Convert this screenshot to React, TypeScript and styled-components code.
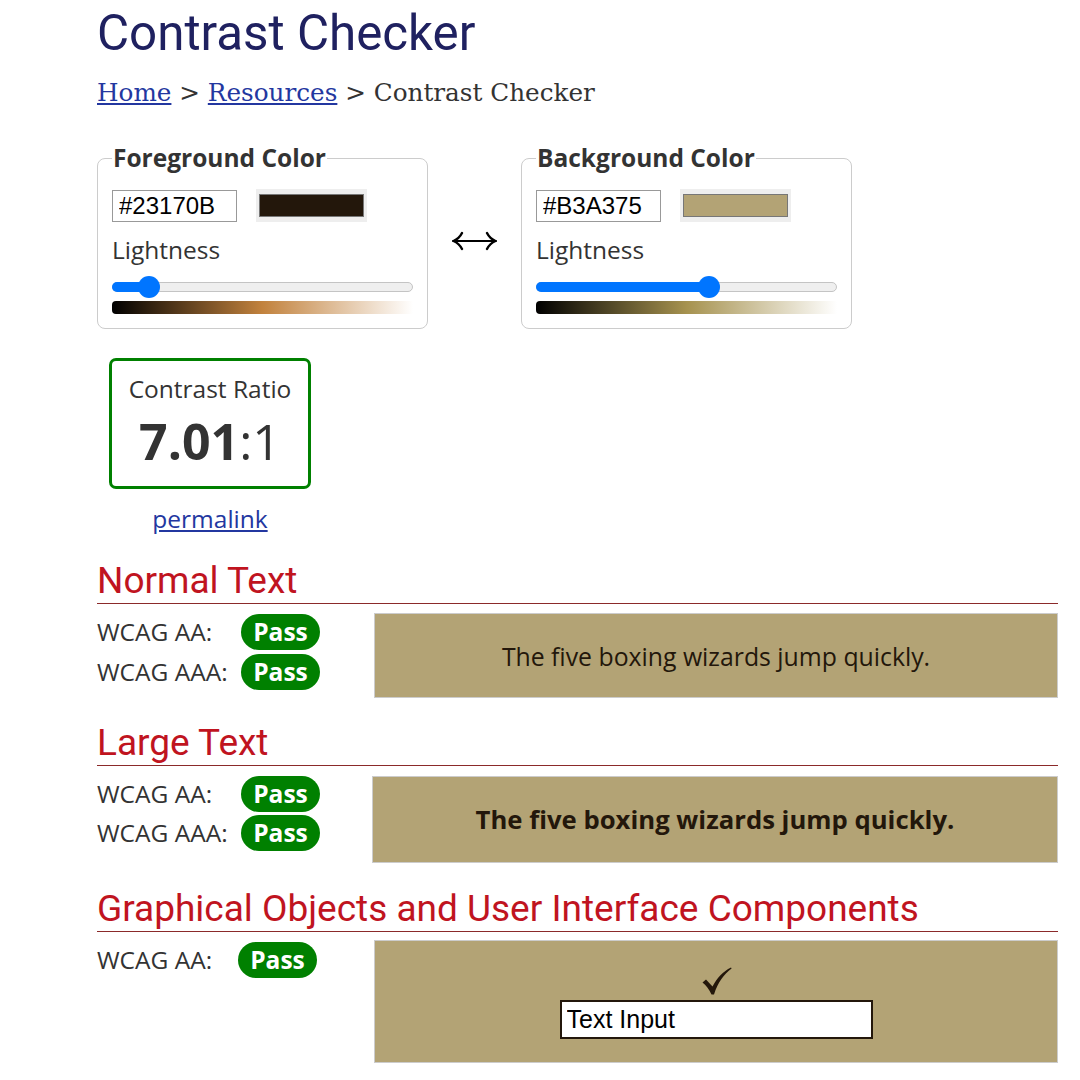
import styled, { createGlobalStyle } from "styled-components";

const GlobalStyle = createGlobalStyle`
  body {
    margin: 0;
    background: #fff;
    font-family: "Open Sans", "Liberation Sans", sans-serif;
    color: #333;
  }
`;

const FG = "#23170B";
const BG = "#B3A375";

const Page = styled.div`
  padding: 0 22px 0 97px;
`;

const Title = styled.h1`
  margin: 0;
  padding-top: 4px;
  font-family: Roboto, sans-serif;
  font-weight: 400;
  font-size: 49.3px;
  line-height: 58px;
  color: #1f2160;
`;

const Crumbs = styled.div`
  margin-top: 16px;
  font-family: "DejaVu Serif", serif;
  font-size: 24.7px;
  line-height: 30px;
  color: #333;
  a {
    color: #2337a0;
    text-decoration: underline;
  }
`;

const PickerRow = styled.div`
  display: flex;
  align-items: center;
  gap: 24px;
  margin-top: 34px;
`;

const Fieldset = styled.fieldset`
  margin: 0;
  width: 331px;
  box-sizing: border-box;
  padding: 15px 14px 14px;
  border: 1px solid #ccc;
  border-radius: 8px;
`;

const Legend = styled.legend`
  padding: 0 1px;
  font-weight: 700;
  font-size: 24.5px;
  line-height: 32px;
  color: #333;
`;

const InputRow = styled.div`
  display: flex;
  align-items: center;
  gap: 19px;
`;

const HexInput = styled.input`
  width: 125px;
  height: 32px;
  box-sizing: border-box;
  border: 1px solid #999;
  padding: 0 6px;
  font-family: "Liberation Sans", Arial, sans-serif;
  font-size: 24px;
  color: #000;
`;

const Swatch = styled.div<{ $color: string }>`
  width: 111px;
  height: 33px;
  box-sizing: border-box;
  background: #eee;
  padding: 5px 3px;
  &::after {
    content: "";
    display: block;
    height: 100%;
    box-sizing: border-box;
    border: 1px solid #777;
    background: ${(p) => p.$color};
  }
`;

const Label = styled.div`
  margin-top: 11px;
  font-size: 24.5px;
  line-height: 33px;
  color: #333;
`;

const Track = styled.div`
  position: relative;
  margin-top: 16px;
  height: 8px;
  border: 1px solid #c4c4c4;
  border-radius: 6px;
  background: #efefef;
`;

const Fill = styled.div`
  position: absolute;
  left: -1px;
  top: -1px;
  bottom: -1px;
  border-radius: 6px;
  background: #0075ff;
`;

const Thumb = styled.div`
  position: absolute;
  top: 50%;
  width: 22px;
  height: 22px;
  margin: -11px 0 0 -11px;
  border-radius: 50%;
  background: #0075ff;
`;

const Gradient = styled.div<{ $mid: string }>`
  margin-top: 9px;
  height: 13px;
  border-radius: 4px 0 0 4px;
  background: linear-gradient(to right, #000, ${(p) => p.$mid}, #fff);
`;

const Swap = styled.svg`
  display: block;
  flex: none;
  width: 45px;
  height: 20px;
  margin-top: 10px;
`;

const RatioWrap = styled.div`
  margin: 29px 0 0 12px;
  width: 202px;
  text-align: center;
`;

const RatioBox = styled.div`
  box-sizing: border-box;
  height: 131px;
  border: 3px solid #008000;
  border-radius: 7px;
  padding-top: 11px;
`;

const RatioLabel = styled.div`
  font-size: 24.5px;
  line-height: 33px;
  color: #333;
`;

const RatioValue = styled.div`
  margin-top: 6px;
  font-size: 50px;
  line-height: 60px;
  color: #333;
  b {
    font-weight: 700;
  }
`;

const Permalink = styled.a`
  display: inline-block;
  margin-top: 13px;
  font-size: 24.5px;
  line-height: 33px;
  color: #2337a0;
  text-decoration: underline;
`;

const SectionTitle = styled.h2<{ $top: number }>`
  margin: ${(p) => p.$top}px 0 0;
  padding: 0;
  border-bottom: 1px solid #8b2a2a;
  font-family: Roboto, sans-serif;
  font-weight: 400;
  font-size: 37px;
  line-height: 44px;
  color: #c0141f;
`;

const ResultRow = styled.div`
  display: flex;
  align-items: flex-start;
  margin-top: 9px;
`;

const Levels = styled.div<{ $gap: number }>`
  width: 277px;
  padding-top: 1px;
  display: flex;
  flex-direction: column;
  gap: ${(p) => p.$gap}px;
`;

const Level = styled.div`
  display: flex;
  align-items: center;
  font-size: 24.5px;
  line-height: 36px;
  color: #333;
`;

const LevelName = styled.span<{ $w: number }>`
  width: ${(p) => p.$w}px;
`;

const Badge = styled.span`
  display: inline-block;
  height: 36px;
  width: 79px;
  border-radius: 18px;
  background: #008000;
  color: #fff;
  font-weight: 700;
  font-size: 24.5px;
  line-height: 36px;
  text-align: center;
`;

const Sample = styled.div<{ $h: number; $bold?: boolean; $shift?: number; $top?: number }>`
  flex: 1;
  margin-left: ${(p) => p.$shift ?? 0}px;
  margin-top: ${(p) => p.$top ?? 0}px;
  height: ${(p) => p.$h}px;
  box-sizing: border-box;
  border: 1px solid #ccc;
  background: ${BG};
  color: ${FG};
  display: flex;
  flex-direction: column;
  align-items: center;
  justify-content: center;
  font-size: ${(p) => (p.$bold ? 25.7 : 24.8)}px;
  font-weight: ${(p) => (p.$bold ? 700 : 400)};
`;

const Check = styled.svg`
  display: block;
  width: 30px;
  height: 28px;
  margin: 2px 0 0 2px;
`;

const DemoInput = styled.input`
  margin-top: 5px;
  width: 313px;
  height: 39px;
  box-sizing: border-box;
  border: 2px solid ${FG};
  padding: 0 5px;
  background: #fff;
  font-family: "Liberation Sans", Arial, sans-serif;
  font-size: 25px;
  color: #000;
`;

type PickerProps = {
  title: string;
  hex: string;
  light: number;
  mid: string;
};

const Picker = ({ title, hex, light, mid }: PickerProps) => {
  const pos = `calc(11px + ${light} * (100% - 22px))`;
  return (
    <Fieldset>
      <Legend>{title}</Legend>
      <InputRow>
        <HexInput defaultValue={hex} />
        <Swatch $color={hex} />
      </InputRow>
      <Label>Lightness</Label>
      <Track>
        <Fill style={{ width: pos }} />
        <Thumb style={{ left: pos }} />
      </Track>
      <Gradient $mid={mid} />
    </Fieldset>
  );
};

export default function App() {
  return (
    <Page>
      <GlobalStyle />
      <Title>Contrast Checker</Title>
      <Crumbs>
        <a href="#">Home</a> &gt; <a href="#">Resources</a> &gt; Contrast Checker
      </Crumbs>

      <PickerRow>
        <Picker title="Foreground Color" hex={FG} light={0.09} mid="#c2823d" />
        <Swap viewBox="0 0 45 20" aria-label="swap colors">
          <path d="M3 10 H42" stroke="#000" strokeWidth="2" />
          <path
            d="M10 2 C8 6 5 8.5 1.5 10 C5 11.5 8 14 10 18"
            stroke="#000"
            strokeWidth="2.4"
            fill="none"
            strokeLinecap="round"
          />
          <path
            d="M35 2 C37 6 40 8.5 43.5 10 C40 11.5 37 14 35 18"
            stroke="#000"
            strokeWidth="2.4"
            fill="none"
            strokeLinecap="round"
          />
        </Swap>
        <Picker title="Background Color" hex={BG} light={0.58} mid="#a6924f" />
      </PickerRow>

      <RatioWrap>
        <RatioBox>
          <RatioLabel>Contrast Ratio</RatioLabel>
          <RatioValue>
            <b>7.01</b>:1
          </RatioValue>
        </RatioBox>
        <Permalink href="#">permalink</Permalink>
      </RatioWrap>

      <SectionTitle $top={24}>Normal Text</SectionTitle>
      <ResultRow>
        <Levels $gap={4}>
          <Level>
            <LevelName $w={144}>WCAG AA:</LevelName>
            <Badge>Pass</Badge>
          </Level>
          <Level>
            <LevelName $w={144}>WCAG AAA:</LevelName>
            <Badge>Pass</Badge>
          </Level>
        </Levels>
        <Sample $h={85}>The five boxing wizards jump quickly.</Sample>
      </ResultRow>

      <SectionTitle $top={23}>Large Text</SectionTitle>
      <ResultRow>
        <Levels $gap={3}>
          <Level>
            <LevelName $w={144}>WCAG AA:</LevelName>
            <Badge>Pass</Badge>
          </Level>
          <Level>
            <LevelName $w={144}>WCAG AAA:</LevelName>
            <Badge>Pass</Badge>
          </Level>
        </Levels>
        <Sample $h={87} $bold $shift={-2} $top={1}>
          The five boxing wizards jump quickly.
        </Sample>
      </ResultRow>

      <SectionTitle $top={24}>Graphical Objects and User Interface Components</SectionTitle>
      <ResultRow>
        <Levels $gap={0}>
          <Level>
            <LevelName $w={141}>WCAG AA:</LevelName>
            <Badge>Pass</Badge>
          </Level>
        </Levels>
        <Sample $h={123} $top={-1}>
          <Check viewBox="0 0 30 28">
            <path
              d="M0.5 15.5 L4 12.5 L10.5 19.5 C15 11 21 4.5 29 0.5 L29.6 1.4 C22 7 16 15 12 27.5 L9.5 27.5 C7 22 4 18 0.5 15.5 Z"
              fill={FG}
            />
          </Check>
          <DemoInput defaultValue="Text Input" />
        </Sample>
      </ResultRow>
    </Page>
  );
}
